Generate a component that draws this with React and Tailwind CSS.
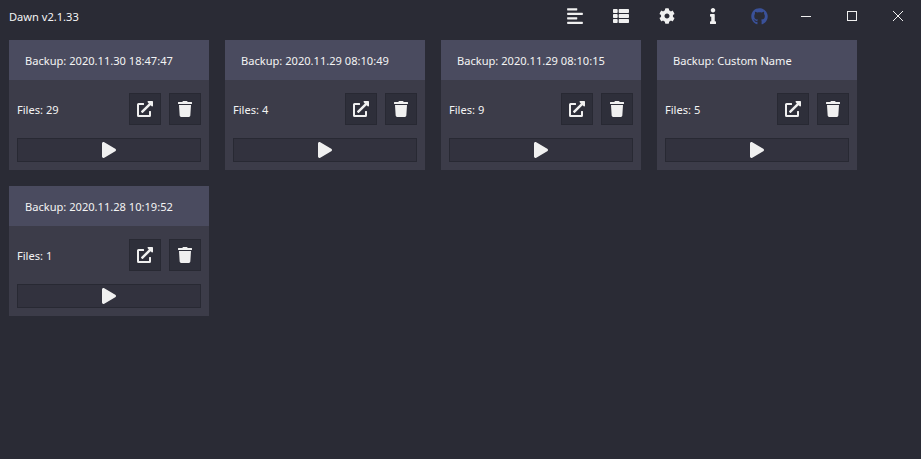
import React from "react";
import { FaAlignLeft, FaThList, FaCog, FaInfo, FaGithub, FaExternalLinkAlt, FaTrash, FaPlay } from "react-icons/fa";

const backups = [
  ["Backup: 2020.11.30 18:47:47", "Files: 29"],
  ["Backup: 2020.11.29 08:10:49", "Files: 4"],
  ["Backup: 2020.11.29 08:10:15", "Files: 9"],
  ["Backup: Custom Name", "Files: 5"],
  ["Backup: 2020.11.28 10:19:52", "Files: 1"],
];

function Card({ title, files }) {
  return (
    <div className="w-[200px] h-[130px] bg-[#3c3c49] flex flex-col">
      <div className="h-10 bg-[#4a4b5f] flex items-center pl-4 pt-[2px] text-[11.1px] text-[#f4f4f4]">{title}</div>
      <div className="flex-1 px-2 pt-[13px]">
        <div className="flex items-center justify-between h-8">
          <span className="text-[11.1px] pt-[2px] text-[#f4f4f4]">{files}</span>
          <div className="flex gap-2">
            <button className="w-8 h-8 bg-[#2e2f3a] border border-[#282933] flex items-center justify-center text-[#f0f0f0]">
              <FaExternalLinkAlt size={16} />
            </button>
            <button className="w-8 h-8 bg-[#2e2f3a] border border-[#282933] flex items-center justify-center text-[#f0f0f0]">
              <FaTrash size={16} />
            </button>
          </div>
        </div>
        <button className="mt-[13px] w-full h-6 bg-[#32323e] border border-[#282933] flex items-center justify-center text-[#f0f0f0]">
          <FaPlay size={16} />
        </button>
      </div>
    </div>
  );
}

export default function App() {
  return (
    <div className="w-[921px] h-[459px] bg-[#2a2b35] overflow-hidden" style={{ fontFamily: '"Noto Sans", sans-serif' }}>
      <div className="h-10 flex items-start">
        <div className="pl-[9px] pt-[8px] text-[11.1px] leading-[17px] text-[#f4f4f4]">Dawn v2.1.33</div>
        <div className="ml-auto flex items-center h-8 text-[#f0f0f0]">
          <div className="w-[46px] flex justify-center -translate-x-px"><FaAlignLeft size={18} /></div>
          <div className="w-[46px] flex justify-center -translate-x-px"><FaThList size={16} /></div>
          <div className="w-[46px] flex justify-center -translate-x-px"><FaCog size={16} /></div>
          <div className="w-[46px] flex justify-center -translate-x-px"><FaInfo size={16} /></div>
          <div className="w-[46px] flex justify-center text-[#3a5199] -translate-x-px"><FaGithub size={17} /></div>
          <div className="w-[46px] flex justify-center">
            <svg width="10" height="10" viewBox="0 0 10 10"><path d="M0 5.5h10" stroke="#f0f0f0" strokeWidth="1" /></svg>
          </div>
          <div className="w-[46px] flex justify-center">
            <svg width="10" height="10" viewBox="0 0 10 10"><rect x="0.5" y="0.5" width="9" height="9" fill="none" stroke="#f0f0f0" strokeWidth="1" /></svg>
          </div>
          <div className="w-[46px] flex justify-center">
            <svg width="10" height="10" viewBox="0 0 10 10"><path d="M0 0L10 10M10 0L0 10" stroke="#f0f0f0" strokeWidth="1" /></svg>
          </div>
        </div>
      </div>
      <div className="pl-[9px] flex flex-wrap gap-4 w-[880px]">
        {backups.map(([t, f], i) => <Card key={i} title={t} files={f} />)}
      </div>
    </div>
  );
}
